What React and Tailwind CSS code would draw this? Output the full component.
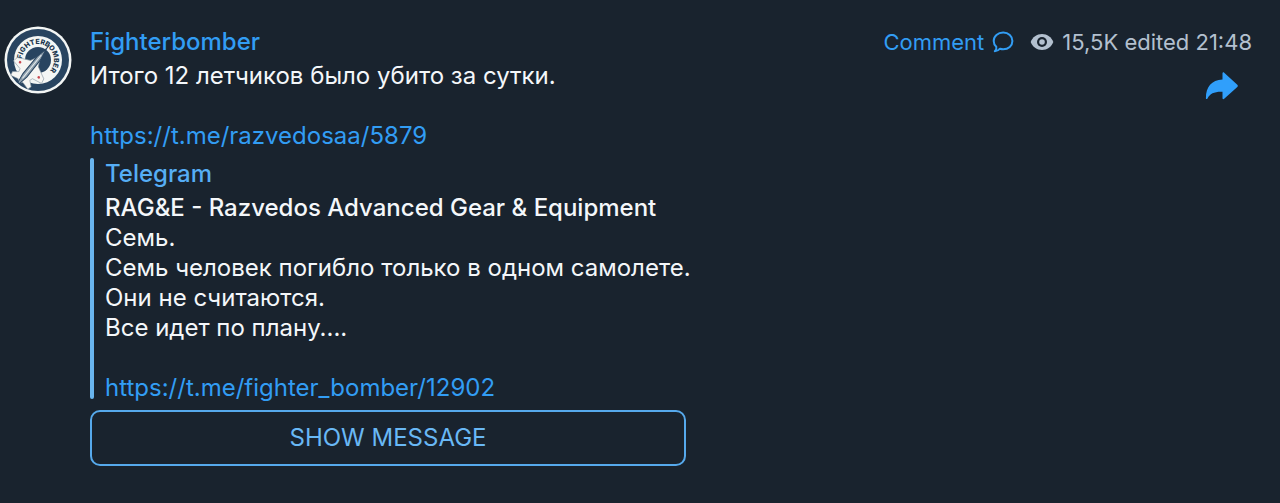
import React from 'react';

const Avatar = () => (
  <svg viewBox="0 0 68 68" className="size-17 shrink-0" role="img" aria-label="Fighterbomber">
    <defs>
      <path id="ring" d="M18 33 A16 16 0 1 1 42.500 47.500 L36 50" />
    </defs>
    <circle cx="34" cy="34" r="33.500" fill="#f3f6f5" />
    <circle cx="34" cy="34" r="31" fill="#284460" />
    <circle cx="34" cy="34" r="24" fill="#f3f6f5" />
    <circle cx="34" cy="34" r="13" fill="#284460" />
    <text fontFamily="Inter, sans-serif" fontSize="7" fontWeight="800" fill="#20364d">
      <textPath href="#ring">FIGHTERBOMBER</textPath>
    </text>
    <g transform="translate(26 43) rotate(39)">
      <path
        d="M0 -18 L3 -11 L5 -7 L17 -1 L18 4 L8 6 L7 9 L12 13 L11 17 L3 15 L0 18 L-3 15 L-11 17 L-12 13 L-7 9 L-8 6 L-18 4 L-17 -1 L-5 -7 L-3 -11 Z"
        fill="#f6f6f3"
        stroke="#8798a5"
        strokeWidth=".6"
      />
      <path d="M0 -31 V-22" stroke="#284460" strokeWidth="1" />
      <path d="M0 -26 L2.400 -14 L2.600 8 L1 18 H-1 L-2.600 8 L-2.400 -14 Z" fill="#8fa0ad" stroke="#284460" strokeWidth="1" />
      <path d="M0 -18 V12" stroke="#e6ecee" strokeWidth="1" />
      <circle cx="-12" cy="1" r="1.300" fill="#c8474f" />
      <circle cx="12" cy="1" r="1.300" fill="#c8474f" />
    </g>
  </svg>
);

const CommentIcon = () => (
  <svg viewBox="0 0 22 22" className="size-[22px]" fill="none" stroke="currentColor" strokeWidth="2" strokeLinejoin="round" aria-hidden="true">
    <path d="M11.2 1.6C16.5 1.6 20.4 5 20.4 9.9C20.4 14.8 16.4 18.2 11.2 18.2C10 18.2 9 18 8 17.7C6.700 19.200 5 20.200 2.800 20.300C4.200 19 4.700 17.500 4.300 15.700C2.600 14.200 1.700 12.200 1.700 9.900C1.700 5 5.800 1.600 11.200 1.600Z" />
  </svg>
);

const EyeIcon = () => (
  <svg viewBox="0 0 24 18" className="h-[18px] w-6" aria-hidden="true">
    <path
      d="M12 1C6.800 1 2.500 4.100 .7 9C2.500 13.900 6.800 17 12 17S21.500 13.900 23.300 9C21.500 4.100 17.200 1 12 1Z"
      fill="currentColor"
    />
    <circle cx="12" cy="9" r="5" fill="#19232e" />
    <circle cx="12" cy="9" r="2.800" fill="currentColor" />
  </svg>
);

const ShareIcon = () => (
  <svg viewBox="0 0 34 28" className="h-7 w-[34px]" fill="currentColor" aria-hidden="true">
    <path d="M17.500 1.300C17.500 .4 18.500 0 19.200 .7L32.300 12.700C33 13.400 33 14.300 32.300 15L19.200 26.800C18.500 27.500 17.500 27.100 17.500 26.200V19.800C9.500 19.500 5 21.500 2.500 26.400C2 27.400 .9 27.300 .9 26.200C.9 14.800 6.500 8.300 17.500 7.600Z" />
  </svg>
);

const quote = ['Семь.', 'Семь человек погибло только в одном самолете.', 'Они не считаются.', 'Все идет по плану....'];

export default function App() {
  return (
    <main className="min-h-screen bg-[#19232e] font-[Inter,'Noto_Sans',sans-serif] text-2xl leading-[30px] text-[#f4f7fa]">
      <article className="flex items-start gap-[18px] py-[26px] pr-7 pl-1">
        <Avatar />

        <div className="min-w-0 flex-1 pt-px">
          <header className="flex items-center justify-between">
            <a href="#channel" className="font-medium text-[#329df4]">Fighterbomber</a>
            <div className="flex items-center gap-4 text-[22px]">
              <button type="button" className="flex items-center gap-2 text-[#329df4]">
                Comment
                <CommentIcon />
              </button>
              <div className="flex items-center gap-2 text-[#b3c0cf]">
                <EyeIcon />
                <span>15,5K edited 21:48</span>
              </div>
            </div>
          </header>

          <div className="flex items-start justify-between">
            <div className="flex w-[596px] max-w-full min-w-0 flex-col">
              <p className="mt-1">Итого 12 летчиков было убито за сутки.</p>
              <a href="#post" className="mt-[30px] text-[#329df4]">https://t.me/razvedosaa/5879</a>

              <div className="mt-[7px] flex gap-[11px]">
                <div className="mb-1 w-1 shrink-0 rounded-full bg-[#69b5ee]" />
                <div className="pt-px sm:whitespace-nowrap">
                  <p className="font-medium text-[#56aef5]">Telegram</p>
                  <p className="mt-1 font-medium">RAG&amp;E - Razvedos Advanced Gear &amp; Equipment</p>
                  {quote.map((line) => (
                    <p key={line}>{line}</p>
                  ))}
                  <a href="#linked" className="mt-[30px] block text-[#329df4]">https://t.me/fighter_bomber/12902</a>
                </div>
              </div>

              <button type="button" className="mt-[7px] h-14 rounded-[10px] border-2 border-[#56a9ec] text-[#69b8f5]">
                SHOW MESSAGE
              </button>
            </div>

            <button type="button" aria-label="Share" className="mt-[15px] mr-[13px] text-[#309ffb]">
              <ShareIcon />
            </button>
          </div>
        </div>
      </article>
    </main>
  );
}
